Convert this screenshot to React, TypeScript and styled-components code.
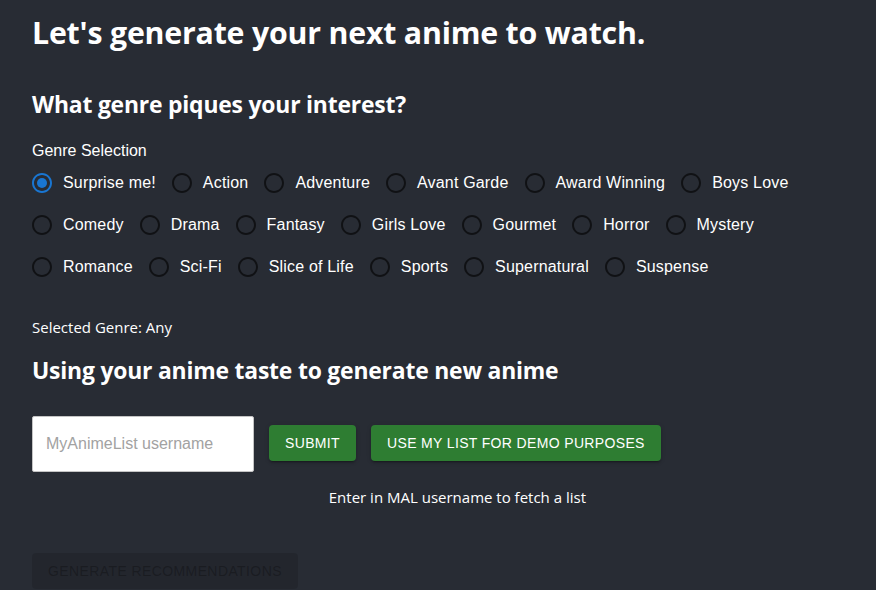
import React, { useState } from 'react';
import styled, { createGlobalStyle } from 'styled-components';

const GlobalStyle = createGlobalStyle`
  html, body {
    margin: 0;
    padding: 0;
    background: #282c34;
  }
`;

const Page = styled.div`
  min-height: 590px;
  background: #282c34;
  color: #ffffff;
  padding: 0 32px;
  font-family: 'Open Sans', 'Noto Sans', sans-serif;
  overflow: hidden;
`;

const Title = styled.h1`
  margin: 12px 0 0;
  font-size: 30.3px;
  line-height: 42px;
  font-weight: 700;
  letter-spacing: -0.2px;
`;

const SubTitle = styled.h2`
  margin: ${(p: { $top: number }) => p.$top}px 0 0;
  font-size: 22.9px;
  line-height: 32px;
  font-weight: 700;
  letter-spacing: -0.2px;
`;

const FieldLabel = styled.div`
  margin-top: 18px;
  font-family: 'Liberation Sans', Arial, sans-serif;
  font-size: 16px;
  line-height: 24px;
`;

const RadioGroup = styled.div`
  display: flex;
  flex-wrap: wrap;
  margin-top: -1px;
`;

const Option = styled.label`
  display: inline-flex;
  align-items: center;
  margin-left: -11px;
  margin-right: 16px;
  cursor: pointer;
  font-family: 'Liberation Sans', Arial, sans-serif;
  font-size: 16px;
  line-height: 24px;
  letter-spacing: 0.18px;
`;

const RadioBox = styled.span`
  display: inline-flex;
  padding: 9px;
  color: ${(p: { $checked: boolean }) => (p.$checked ? '#1976d2' : 'rgba(0, 0, 0, 0.6)')};
`;

const Note = styled.div`
  margin-top: 29px;
  font-size: 15px;
  line-height: 20px;
`;

const InputRow = styled.div`
  display: flex;
  align-items: flex-start;
  margin-top: 29px;
`;

const UserInput = styled.input`
  box-sizing: border-box;
  width: 222px;
  height: 56px;
  padding: 0 13px;
  border: 1px solid #c4c4c4;
  border-radius: 2px;
  background: #ffffff;
  font-family: 'Liberation Sans', Arial, sans-serif;
  font-size: 16px;
  color: #222;
  outline: none;
  &::placeholder {
    color: #a2a2a2;
  }
`;

const ButtonColumn = styled.div`
  display: flex;
  flex-direction: column;
  align-items: center;
`;

const Buttons = styled.div`
  display: flex;
  margin-top: 9px;
`;

const Button = styled.button`
  margin-left: 15px;
  padding: 6px 16px;
  border: none;
  border-radius: 4px;
  background: #2e7d32;
  color: #ffffff;
  font-family: 'Liberation Sans', Arial, sans-serif;
  font-size: 14px;
  font-weight: 500;
  line-height: 24px;
  letter-spacing: 0.35px;
  text-transform: uppercase;
  box-shadow: 0 3px 1px -2px rgba(0, 0, 0, 0.2), 0 2px 2px rgba(0, 0, 0, 0.14),
    0 1px 5px rgba(0, 0, 0, 0.12);
  cursor: pointer;
`;

const Helper = styled.div`
  margin-top: 26px;
  font-size: 15px;
  line-height: 20px;
`;

const GenerateButton = styled.button`
  margin-top: 46px;
  padding: 6px 16px;
  border: none;
  border-radius: 4px;
  background: rgba(0, 0, 0, 0.12);
  color: rgba(0, 0, 0, 0.26);
  font-family: 'Liberation Sans', Arial, sans-serif;
  font-size: 14px;
  font-weight: 500;
  line-height: 24px;
  letter-spacing: 0.4px;
  text-transform: uppercase;
`;

const genres = [
  'Surprise me!',
  'Action',
  'Adventure',
  'Avant Garde',
  'Award Winning',
  'Boys Love',
  'Comedy',
  'Drama',
  'Fantasy',
  'Girls Love',
  'Gourmet',
  'Horror',
  'Mystery',
  'Romance',
  'Sci-Fi',
  'Slice of Life',
  'Sports',
  'Supernatural',
  'Suspense',
];

const RadioIcon = ({ checked }: { checked: boolean }) => (
  <svg width="24" height="24" viewBox="0 0 24 24" fill="currentColor">
    <path d="M12 2C6.48 2 2 6.48 2 12s4.48 10 10 10 10-4.48 10-10S17.52 2 12 2zm0 18c-4.42 0-8-3.58-8-8s3.58-8 8-8 8 3.58 8 8-3.58 8-8 8z" />
    {checked && <circle cx="12" cy="12" r="5" />}
  </svg>
);

export default function App() {
  const [genre, setGenre] = useState('Surprise me!');

  return (
    <Page>
      <GlobalStyle />
      <Title>Let's generate your next anime to watch.</Title>
      <SubTitle $top={35}>What genre piques your interest?</SubTitle>
      <FieldLabel>Genre Selection</FieldLabel>
      <RadioGroup>
        {genres.map((g) => (
          <Option key={g} onClick={() => setGenre(g)}>
            <RadioBox $checked={genre === g}>
              <RadioIcon checked={genre === g} />
            </RadioBox>
            {g}
          </Option>
        ))}
      </RadioGroup>
      <Note>Selected Genre: {genre === 'Surprise me!' ? 'Any' : genre}</Note>
      <SubTitle $top={18}>Using your anime taste to generate new anime</SubTitle>
      <InputRow>
        <UserInput placeholder="MyAnimeList username" />
        <ButtonColumn>
          <Buttons>
            <Button>Submit</Button>
            <Button>Use my list for demo purposes</Button>
          </Buttons>
          <Helper>Enter in MAL username to fetch a list</Helper>
        </ButtonColumn>
      </InputRow>
      <GenerateButton disabled>Generate recommendations</GenerateButton>
    </Page>
  );
}
